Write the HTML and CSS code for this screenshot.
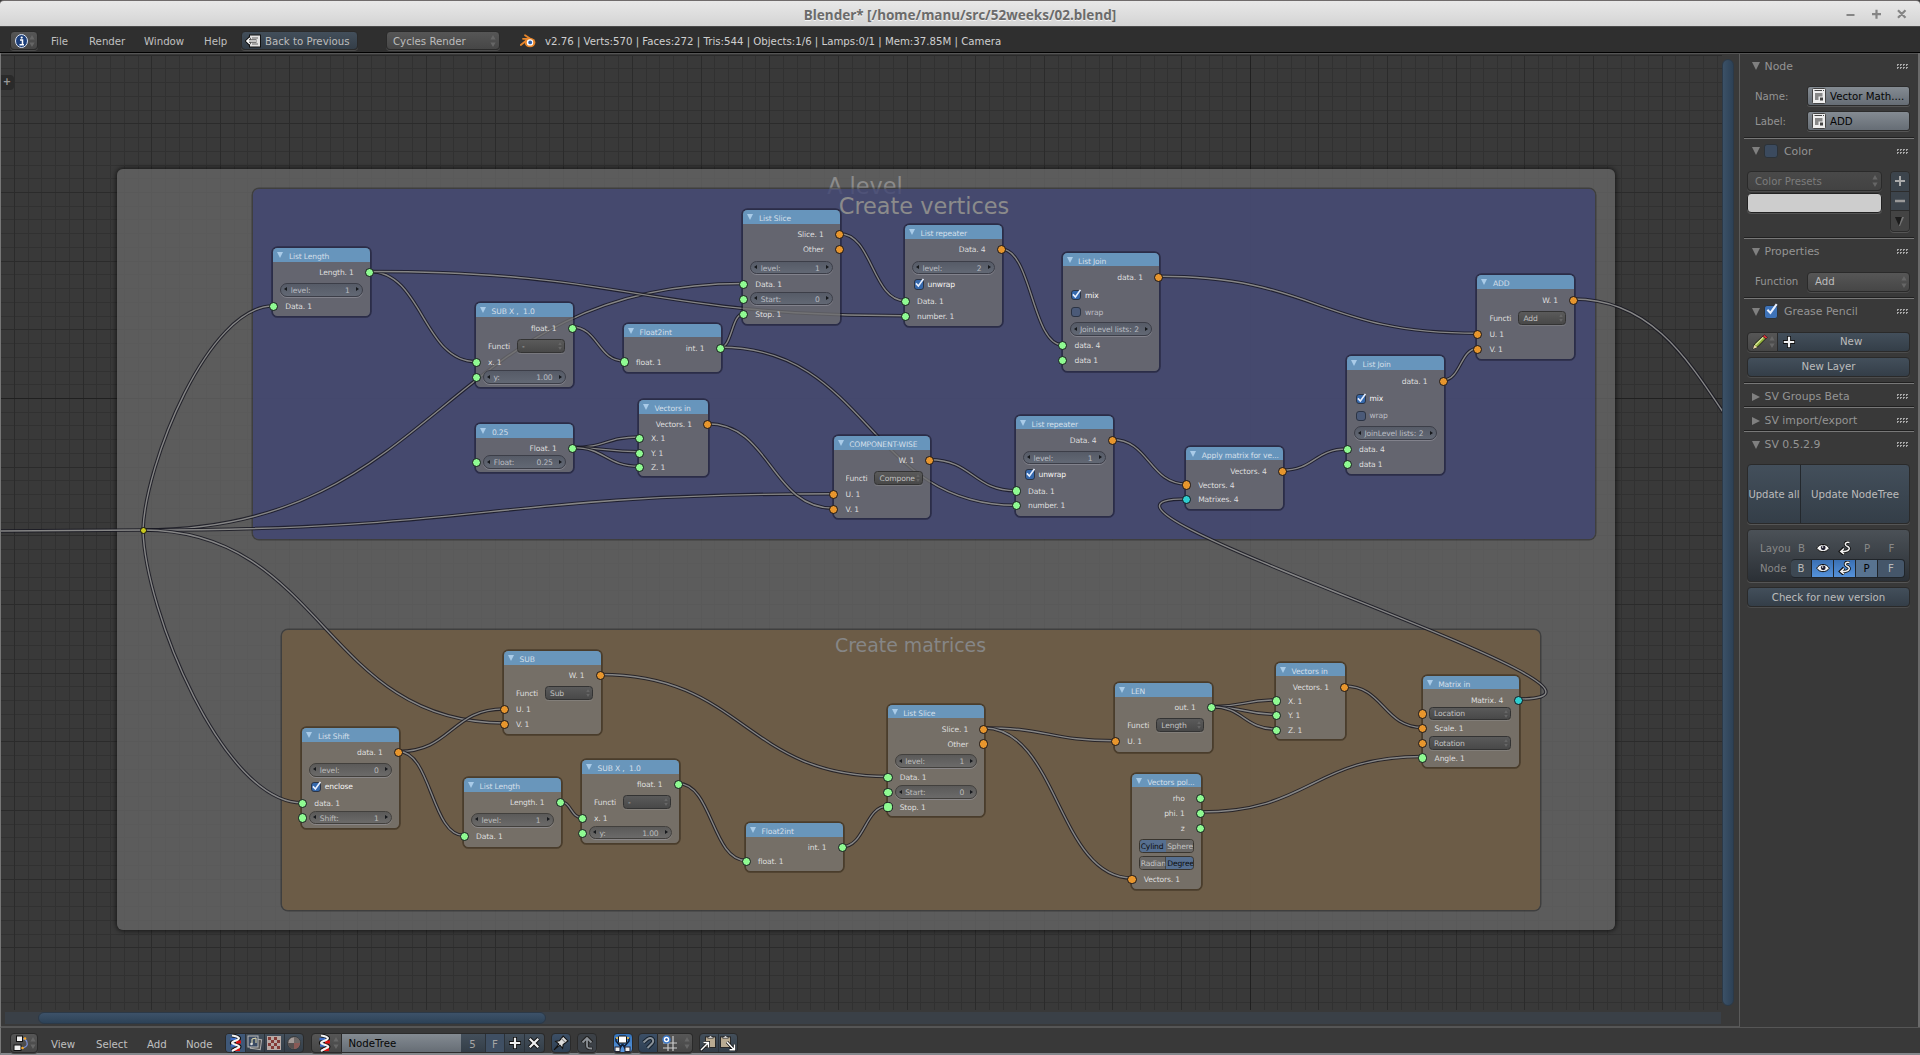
FILE: index.html
```html
<!DOCTYPE html>
<html lang="en">
<head>
<meta charset="utf-8">
<title>Blender* [/home/manu/src/52weeks/02.blend]</title>
<link rel="stylesheet" href="styles.css">
</head>
<body>
<svg class="defs" width="0" height="0">
  <symbol id="updown" viewBox="0 0 6 14"><path d="M3 1L5.6 5.6H.4zM3 13L.4 8.4h5.2z" fill="#666"/></symbol>
  <symbol id="plus" viewBox="0 0 12 12"><path d="M6 0v12M0 6h12" stroke="#111" stroke-width="4"/><path d="M6 .8v10.4M.8 6h10.4" stroke="#f0f0f0" stroke-width="2.2"/></symbol>
  <symbol id="check" viewBox="0 0 12 12"><path d="M2.2 6.2L5 9.2L10.8 1" stroke="#e8f0ff" stroke-width="1.9" fill="none"/></symbol>
  <symbol id="nodeicon" viewBox="0 0 14 16"><rect x=".5" y=".5" width="13" height="15" rx="1" fill="#eee" stroke="#444"/><path d="M2.5 2.500h7.500M11 2.500h1" stroke="#444" stroke-width="1"/><path d="M3 5h7.500v3.500H6.500V12H3z" fill="#888"/><rect x="8" y="9.500" width="3" height="3" fill="#444"/></symbol>
  <symbol id="helix" viewBox="0 0 14 18"><path d="M4 1.500C13 3 12 5 8 6.500S2 9 7 10.500S13 13 8.500 14.500L4 17" fill="none" stroke="#111" stroke-width="4.200"/><path d="M2.500 5h6M3 11.500h5" stroke="#3b6bc4" stroke-width="2.400"/><path d="M8 8h5M6 15.500h6" stroke="#d11" stroke-width="3"/><path d="M4 1.500C13 3 12 5 8 6.500S2 9 7 10.500S13 13 8.500 14.500L4 17" fill="none" stroke="#f2f2f2" stroke-width="2.100"/></symbol>
  <symbol id="eye" viewBox="0 0 14 10"><path d="M.7 5.200C3.500.2 10.500.2 13.300 5.200C10.500 9.800 3.500 9.800.7 5.200z" fill="#f4f4f4" stroke="#111"/><circle cx="7.200" cy="4.800" r="2.400" fill="#223"/><circle cx="6.600" cy="4" r=".8" fill="#fff"/></symbol>
  <symbol id="curve" viewBox="0 0 14 14"><path d="M11.500 1.500C7 .2 6 4 9.500 5.500S11.500 11 3 10.500M6 7L2.500 10.500L6 13.500" fill="none" stroke="#111" stroke-width="3.200"/><path d="M11.500 1.500C7 .2 6 4 9.500 5.500S11.500 11 3 10.500M6 7.500L2.800 10.500L6 13" fill="none" stroke="#f2f2f2" stroke-width="1.500"/></symbol>
  <symbol id="clip" viewBox="0 0 12 14"><rect x=".5" y="2" width="11" height="11.500" fill="#b9ab92" stroke="#222"/><path d="M3 3.500V2h1.500c0-1.800 3-1.800 3 0H9v1.500z" fill="#e5e5e5" stroke="#222" stroke-width=".7"/></symbol>
</svg>

<header class="titlebar">
  <h1>Blender* [/home/manu/src/52weeks/02.blend]</h1>
  <svg class="winbtns" width="66" height="14" viewBox="0 0 66 14"><path d="M5.500 8h8M31 7.200h9M35.500 2.700v9M57 3.200l7.500 7.500M64.500 3.200L57 10.700" stroke="#858585" stroke-width="2.200" fill="none"/></svg>
</header>

<nav class="menubar">
  <span class="btn grey editor"><svg width="13" height="14" viewBox="0 0 13 14"><ellipse cx="6.500" cy="7" rx="6" ry="6.500" fill="#1d3f7a" stroke="#dde6f5"/><path d="M5 6h2.500v4.500M4.500 10.800h4.500" stroke="#fff" stroke-width="1.500" fill="none"/><circle cx="6.700" cy="3.600" r="1.100" fill="#fff"/></svg><svg width="6" height="14"><use href="#updown"/></svg></span>
  <span class="m file">File</span><span class="m render">Render</span><span class="m window">Window</span><span class="m help">Help</span>
  <span class="btn blue back"><svg width="16" height="14" viewBox="0 0 16 14"><rect x="4.500" y="1" width="11" height="12" fill="#e2e2e2" stroke="#111"/><path d="M13 4H7M13 10H7" stroke="#666" stroke-width="1"/><path d="M11.500 7H1.500M5 3.500L1.500 7L5 10.500" fill="none" stroke="#111" stroke-width="3"/><path d="M11.500 7H2M5 4L1.800 7L5 10" fill="none" stroke="#fff" stroke-width="1.400"/></svg>Back to Previous</span>
  <span class="btn grey engine">Cycles Render<svg width="6" height="14"><use href="#updown"/></svg></span>
  <svg class="logo" width="16" height="14" viewBox="0 0 16 14"><path d="M5 1.200L13 6.500M.8 11L7 6M3 4.800h7" stroke="#e8862b" stroke-width="1.800" stroke-linecap="round"/><ellipse cx="10" cy="8.600" rx="5.400" ry="4.700" fill="#e8862b"/><circle cx="10" cy="8.400" r="3.200" fill="#fff"/><circle cx="10.200" cy="8.400" r="1.900" fill="#2d5ea8"/></svg>
  <span class="stats">v2.76 | Verts:570 | Faces:272 | Tris:544 | Objects:1/6 | Lamps:0/1 | Mem:37.85M | Camera</span>
</nav>

<main>
<section class="editor-area">
<div class="canvas">
  <svg class="grid" id="grid" width="1722" height="957" viewBox="0 53 1722 957"></svg>
  <span class="expander">+</span>
  <div class="layer">
    <div class="frame level"><h2>A level</h2></div>
    <div class="frame vertices"><h2>Create vertices</h2></div>
    <div class="frame matrices"><h2>Create matrices</h2></div>
  </div>
  <svg class="links" id="links" width="1722" height="957" viewBox="0 53 1722 957"></svg>
  <div class="layer">
    <i class="reroute"></i>

    <article class="node" id="length-a"><h3>List Length</h3>
      <p class="out g">Length. 1</p>
      <div class="controls"><div class="num"><span>level:</span><b>1</b></div></div>
      <p class="in g">Data. 1</p></article>

    <article class="node roomy" id="subx-a"><h3>SUB X ,&nbsp; 1.0</h3>
      <p class="out g">float. 1</p>
      <div class="controls"><div class="fn"><span>Functi</span><em>-<svg><use href="#updown"/></svg></em></div></div>
      <p class="in g">x. 1</p>
      <div class="in g"><div class="num"><span>y:</span><b>1.00</b></div></div></article>

    <article class="node tight" id="quarter"><h3>0.25</h3>
      <p class="out g">Float. 1</p>
      <div class="in g"><div class="num"><span>Float:</span><b>0.25</b></div></div></article>

    <article class="node tight" id="f2i-a"><h3>Float2int</h3>
      <p class="out g">int. 1</p>
      <p class="in g">float. 1</p></article>

    <article class="node tight" id="vin-a"><h3>Vectors in</h3>
      <p class="out o">Vectors. 1</p>
      <p class="in g">X. 1</p><p class="in g">Y. 1</p><p class="in g">Z. 1</p></article>

    <article class="node roomy" id="slice-a"><h3>List Slice</h3>
      <p class="out o">Slice. 1</p><p class="out o">Other</p>
      <div class="controls"><div class="num"><span>level:</span><b>1</b></div></div>
      <p class="in g">Data. 1</p>
      <div class="in g"><div class="num"><span>Start:</span><b>0</b></div></div>
      <p class="in g">Stop. 1</p></article>

    <article class="node roomy" id="rep-a"><h3>List repeater</h3>
      <p class="out o">Data. 4</p>
      <div class="controls"><div class="num"><span>level:</span><b>2</b></div><div class="tick on"><i><svg><use href="#check"/></svg></i>unwrap</div></div>
      <p class="in g">Data. 1</p><p class="in g">number. 1</p></article>

    <article class="node roomy" id="join-a"><h3>List Join</h3>
      <p class="out o">data. 1</p>
      <div class="controls"><div class="tick on"><i><svg><use href="#check"/></svg></i>mix</div><div class="tick"><i></i>wrap</div><div class="num"><span>JoinLevel lists:</span><b>2</b></div></div>
      <p class="in g">data. 4</p><p class="in g">data 1</p></article>

    <article class="node" id="component"><h3>COMPONENT-WISE</h3>
      <p class="out o">W. 1</p>
      <div class="controls"><div class="fn"><span>Functi</span><em>Compone<svg><use href="#updown"/></svg></em></div></div>
      <p class="in o">U. 1</p><p class="in o">V. 1</p></article>

    <article class="node" id="rep-b"><h3>List repeater</h3>
      <p class="out o">Data. 4</p>
      <div class="controls"><div class="num"><span>level:</span><b>1</b></div><div class="tick on"><i><svg><use href="#check"/></svg></i>unwrap</div></div>
      <p class="in g">Data. 1</p><p class="in g">number. 1</p></article>

    <article class="node tight" id="apply"><h3>Apply matrix for ve...</h3>
      <p class="out o">Vectors. 4</p>
      <p class="in o">Vectors. 4</p><p class="in c">Matrixes. 4</p></article>

    <article class="node roomy" id="join-b"><h3>List Join</h3>
      <p class="out o">data. 1</p>
      <div class="controls"><div class="tick on"><i><svg><use href="#check"/></svg></i>mix</div><div class="tick"><i></i>wrap</div><div class="num"><span>JoinLevel lists:</span><b>2</b></div></div>
      <p class="in g">data. 4</p><p class="in g">data 1</p></article>

    <article class="node roomy" id="add"><h3>ADD</h3>
      <p class="out o">W. 1</p>
      <div class="controls"><div class="fn"><span>Functi</span><em>Add<svg><use href="#updown"/></svg></em></div></div>
      <p class="in o">U. 1</p><p class="in o">V. 1</p></article>

    <article class="node warm" id="shift"><h3>List Shift</h3>
      <p class="out o">data. 1</p>
      <div class="controls"><div class="num"><span>level:</span><b>0</b></div><div class="tick on"><i><svg><use href="#check"/></svg></i>enclose</div></div>
      <p class="in g">data. 1</p>
      <div class="in g"><div class="num"><span>Shift:</span><b>1</b></div></div></article>

    <article class="node warm" id="length-b"><h3>List Length</h3>
      <p class="out g">Length. 1</p>
      <div class="controls"><div class="num"><span>level:</span><b>1</b></div></div>
      <p class="in g">Data. 1</p></article>

    <article class="node warm" id="sub"><h3>SUB</h3>
      <p class="out o">W. 1</p>
      <div class="controls"><div class="fn"><span>Functi</span><em>Sub<svg><use href="#updown"/></svg></em></div></div>
      <p class="in o">U. 1</p><p class="in o">V. 1</p></article>

    <article class="node warm" id="subx-b"><h3>SUB X ,&nbsp; 1.0</h3>
      <p class="out g">float. 1</p>
      <div class="controls"><div class="fn"><span>Functi</span><em>-<svg><use href="#updown"/></svg></em></div></div>
      <p class="in g">x. 1</p>
      <div class="in g"><div class="num"><span>y:</span><b>1.00</b></div></div></article>

    <article class="node warm tight" id="f2i-b"><h3>Float2int</h3>
      <p class="out g">int. 1</p>
      <p class="in g">float. 1</p></article>

    <article class="node warm" id="slice-b"><h3>List Slice</h3>
      <p class="out o">Slice. 1</p><p class="out o">Other</p>
      <div class="controls"><div class="num"><span>level:</span><b>1</b></div></div>
      <p class="in g">Data. 1</p>
      <div class="in g"><div class="num"><span>Start:</span><b>0</b></div></div>
      <p class="in g">Stop. 1</p></article>

    <article class="node warm" id="len"><h3>LEN</h3>
      <p class="out g">out. 1</p>
      <div class="controls"><div class="fn"><span>Functi</span><em>Length<svg><use href="#updown"/></svg></em></div></div>
      <p class="in o">U. 1</p></article>

    <article class="node warm roomy" id="polar"><h3>Vectors pol...</h3>
      <p class="out g">rho</p><p class="out g">phi. 1</p><p class="out g">z</p>
      <div class="controls"><div class="pair"><span class="sel">Cylind</span><span>Sphere</span></div><div class="pair"><span>Radian</span><span class="sel">Degree</span></div></div>
      <p class="in o">Vectors. 1</p></article>

    <article class="node warm tight" id="vin-b"><h3>Vectors in</h3>
      <p class="out o">Vectors. 1</p>
      <p class="in g">X. 1</p><p class="in g">Y. 1</p><p class="in g">Z. 1</p></article>

    <article class="node warm tight" id="matrix"><h3>Matrix in</h3>
      <p class="out c">Matrix. 4</p>
      <div class="in o"><em class="drop">Location<svg><use href="#updown"/></svg></em></div>
      <p class="in o">Scale. 1</p>
      <div class="in o"><em class="drop">Rotation<svg><use href="#updown"/></svg></em></div>
      <p class="in g">Angle. 1</p></article>
  </div>
</div>
<div class="vscroll"><i></i></div>
<div class="hscroll"><i></i></div>
</section>

<aside>
  <section class="s-node">
    <h4><i class="tri"></i>Node<i class="dots"></i></h4>
    <div class="prop"><label>Name:</label><span class="text"><svg width="14" height="16"><use href="#nodeicon"/></svg>Vector Math....</span></div>
    <div class="prop"><label>Label:</label><span class="text"><svg width="14" height="16"><use href="#nodeicon"/></svg>ADD</span></div>
  </section>
  <section class="s-color">
    <h4><i class="tri"></i><i class="box"></i>Color<i class="dots"></i></h4>
    <div class="presets">
      <div class="left"><span class="btn grey dim">Color Presets<svg width="6" height="14"><use href="#updown"/></svg></span><span class="swatch"></span></div>
      <div class="stack"><span><svg width="12" height="12" viewBox="0 0 12 12"><path d="M6 1v10M1 6h10" stroke="#aaa" stroke-width="2"/></svg></span><span><svg width="12" height="12" viewBox="0 0 12 12"><path d="M1 6h10" stroke="#999" stroke-width="2.500"/></svg></span><span class="last"><svg width="12" height="12" viewBox="0 0 12 12"><path d="M1 2h7L5 11z" fill="#1c1c1c"/><path d="M8 2h2L6 11H5z" fill="#777"/></svg></span></div>
    </div>
  </section>
  <section class="s-props">
    <h4><i class="tri"></i>Properties<i class="dots"></i></h4>
    <div class="prop"><label>Function</label><span class="btn grey fnsel">Add<svg width="6" height="14"><use href="#updown"/></svg></span></div>
  </section>
  <section class="s-grease">
    <h4><i class="tri"></i><i class="box on"><svg width="13" height="13"><use href="#check"/></svg></i>Grease Pencil<i class="dots"></i></h4>
    <div class="newrow"><span class="btn grey pencil"><svg width="16" height="16" viewBox="0 0 16 16"><path d="M1 15l1.500-5L11 2l3 2.500L5.500 13z" fill="#8fae3a" stroke="#1a1a1a"/><path d="M3.500 11L11.500 3" stroke="#d8e89a" stroke-width="1.200"/><path d="M10.500 2.300l2-1.500 3 2.500-1.500 1.700z" fill="#d8343a" stroke="#1a1a1a" stroke-width=".6"/><path d="M1 15l1.200-4 3 2.200z" fill="#e8d7a8"/></svg><svg width="6" height="14"><use href="#updown"/></svg></span><span class="btn blue new"><svg width="12" height="12"><use href="#plus"/></svg><b>New</b></span></div>
    <span class="btn blue wide">New Layer</span>
  </section>
  <section class="s-fold"><h4><i class="tri closed"></i>SV Groups Beta<i class="dots"></i></h4></section>
  <section class="s-fold"><h4><i class="tri closed"></i>SV import/export<i class="dots"></i></h4></section>
  <section class="s-sv">
    <h4><i class="tri"></i>SV 0.5.2.9<i class="dots"></i></h4>
    <div class="update"><span>Update all</span><span>Update NodeTree</span></div>
    <div class="togbox">
      <div class="trow"><span class="tl">Layou</span><span>B</span><span><svg width="14" height="10"><use href="#eye"/></svg></span><span><svg width="14" height="14"><use href="#curve"/></svg></span><span>P</span><span>F</span></div>
      <div class="trow live"><span class="tl">Node</span><span>B</span><span class="hot"><svg width="14" height="10"><use href="#eye"/></svg></span><span class="hot"><svg width="14" height="14"><use href="#curve"/></svg></span><span class="mid">P</span><span class="end">F</span></div>
    </div>
    <span class="btn blue wide">Check for new version</span>
  </section>
</aside>
</main>

<footer>
  <span class="btn grey f-ed"><svg width="17" height="17" viewBox="0 0 17 17"><path d="M6 4h6M12 4c3 3 4 8-3 9" stroke="#7a90d8" fill="none" stroke-width="1.300"/><rect x="3.500" y="1" width="6" height="5.500" fill="#eee" stroke="#111"/><rect x="1" y="10" width="7" height="5.500" fill="#eee" stroke="#111"/><circle cx="12" cy="3.500" r="1.300" fill="#f5a623"/><circle cx="9.500" cy="13" r="1.300" fill="#f5a623"/></svg><svg width="6" height="14"><use href="#updown"/></svg></span>
  <span class="m view">View</span><span class="m select">Select</span><span class="m addm">Add</span><span class="m nodem">Node</span>
  <span class="group types">
    <span class="on"><svg width="14" height="18"><use href="#helix"/></svg></span>
    <span><svg width="16" height="16" viewBox="0 0 16 16"><rect x="4" y="4" width="10" height="10" transform="rotate(8 9 9)" fill="#555" stroke="#aaa"/><rect x="1" y="1" width="10" height="11" fill="#3a4a63" stroke="#bbb"/><path d="M5 9V4l4-1v5" stroke="#e8e0b0" fill="none"/><circle cx="4.500" cy="9" r="1.300" fill="#ddd"/></svg></span>
    <span><svg width="14" height="14" viewBox="0 0 14 14"><rect width="14" height="14" fill="#b8aaa5"/><path d="M1 1h3v3H1zM7 1h3v3H7zM4 4h3v3H4zM10 4h3v3h-3zM1 7h3v3H1zM7 7h3v3H7zM4 10h3v3H4zM10 10h3v3h-3z" fill="#843c38"/></svg></span>
    <span><svg width="14" height="14" viewBox="0 0 14 14"><circle cx="7" cy="7" r="6.300" fill="#a39a97" stroke="#333"/><path d="M7 1A6 6 0 0 1 13 7H7z" fill="#6e6866"/><path d="M7 7v6A6 6 0 0 0 13 7z" fill="#8a5a56"/><path d="M1 7A6 6 0 0 0 7 13V7z" fill="#56504f"/></svg></span>
  </span>
  <span class="btn grey tree"><svg width="14" height="18"><use href="#helix"/></svg><svg width="6" height="14"><use href="#updown"/></svg></span>
  <span class="name">NodeTree</span>
  <span class="group acts"><span class="five">5</span><span class="f">F</span><span><svg width="12" height="12"><use href="#plus"/></svg></span><span><svg width="12" height="12" viewBox="0 0 12 12"><path d="M1.500 1.500l9 9M10.500 1.500l-9 9" stroke="#111" stroke-width="4"/><path d="M1.700 1.700l8.600 8.600M10.300 1.700l-8.600 8.600" stroke="#f0f0f0" stroke-width="2.100"/></svg></span></span>
  <span class="btn navy pin"><svg width="16" height="16" viewBox="0 0 15 15"><path d="M1 14l4.500-5.500L2.500 6l3.500-.5L9.500 1 14 5.500 9.500 9 9 12.500 6.500 9.500z" fill="#ddd" stroke="#111"/><path d="M8 3.500l3.500 3.500" stroke="#888"/></svg></span>
  <span class="btn blue faded up"><svg width="14" height="15" viewBox="0 0 14 15"><path d="M7 2v8c0 2 1 2.500 5.500 2.500M2 6.500L7 1.500l5 5" fill="none" stroke="#222" stroke-width="3.500"/><path d="M7 2v8c0 2 1 2.500 5 2.500M2.500 6.500L7 2l4.500 4.500" fill="none" stroke="#8d9298" stroke-width="1.800"/></svg></span>
  <span class="btn bright"><svg width="17" height="17" viewBox="0 0 17 17"><path d="M2 3v3l5 6M15 3v3l-5 6M8.500 9l-3 5M8.500 9l3 5" stroke="#10203a" fill="none" stroke-width="1.500"/><rect x="4.500" y="1" width="8" height="7" rx="1" fill="#fff" stroke="#111"/><rect x="1" y="12" width="5" height="4.500" fill="#eee" stroke="#223"/><rect x="11" y="12" width="5" height="4.500" fill="#eee" stroke="#223"/><circle cx="3" cy="3" r="1.100" fill="#f5c04a"/><circle cx="14" cy="3" r="1.100" fill="#f5c04a"/></svg></span>
  <span class="btn navy magnet"><svg width="14" height="14" viewBox="0 0 14 14"><path d="M2.500 6.500L6.500 3c5-3 7 2 4.500 4.500L6.500 12" fill="none" stroke="#15202c" stroke-width="4"/><path d="M2.500 6.500L6.500 3c5-3 7 2 4.500 4.500L6.500 12" fill="none" stroke="#8a929a" stroke-width="2"/></svg></span>
  <span class="btn grey snap"><svg width="15" height="16" viewBox="0 0 15 16"><path d="M6 4v12M11 1v15M1 8h14M1 13h14" stroke="#ccc" stroke-width="1.200"/><circle cx="4.500" cy="4.500" r="3.500" fill="#fff" stroke="#3b78c8" stroke-width="1.500"/><circle cx="4.500" cy="4.500" r="1.200" fill="#2255a5"/></svg><svg width="6" height="14"><use href="#updown"/></svg></span>
  <span class="group clips"><span><svg width="17" height="16" viewBox="0 0 17 16"><svg x="5" y="0" width="11" height="13"><use href="#clip"/></svg><path d="M1 15L8 8M3.500 7.500H8.500V12.500" fill="none" stroke="#111" stroke-width="3"/><path d="M1 15L8 8M3.500 7.500H8.500V12.500" fill="none" stroke="#fff" stroke-width="1.500"/></svg></span><span><svg width="17" height="16" viewBox="0 0 17 16"><svg x="1" y="0" width="11" height="13"><use href="#clip"/></svg><path d="M8 7l7 7.500M10.500 14.800H15.500V9.500" fill="none" stroke="#111" stroke-width="3"/><path d="M8 7l7 7.500M10.500 14.800H15.500V9.500" fill="none" stroke="#fff" stroke-width="1.500"/></svg></span></span>
</footer>
<script src="script.js"></script>
</body>
</html>
```
FILE: script.js
```js
// Background grid: thin lines every 13.73px, stronger every fifth, axes darkest.
const STEP = 13.732, OX = 1250.3, OY = 398.5;
const tiers = { minor: '', major: '', axis: '' };
const tier = k => (k === 0 ? 'axis' : k % 5 === 0 ? 'major' : 'minor');
for (let k = -92; k <= 34; k++) tiers[tier(k)] += `M${Math.floor(OX + k * STEP) + 0.5} 55V1010`;
for (let k = -25; k <= 44; k++) tiers[tier(k)] += `M0 ${Math.floor(OY + k * STEP) + 0.5}H1722`;
document.getElementById('grid').innerHTML =
  Object.entries(tiers).map(([name, d]) => `<path class="${name}" d="${d}"/>`).join('');

// Links: output socket x, y -> input socket x, y.
const links = [
  [143, 530, 743, 283.5], [143, 530, 834, 493.8],
  [143, 530, 504, 723],
  [369.5, 271.5, 476, 361.7], [369.5, 271.5, 905, 315.7],
  [572, 327, 624, 361], [572.5, 447.6, 639, 437], [572.5, 447.6, 639, 451.7], [572.5, 447.6, 639, 466.3],
  [720.5, 347.3, 743.3, 313.7], [720.5, 347.3, 1016, 505.3],
  [707.5, 423.7, 834, 508.3], [839.7, 233.7, 905, 300.7],
  [1001, 249, 1062.7, 345], [1158.5, 276.3, 1477.5, 333.3],
  [929.7, 459.7, 1016, 490.7], [1112, 439.5, 1186.4, 484],
  [1282, 470.3, 1347, 449], [1443.5, 380, 1477.5, 348.5],
  [1573.5, 299, 1870.5, 522], [1519, 699, 1186.4, 498.9],
  [398.7, 751.5, 504, 708.9], [398.7, 751.5, 464, 835.5],
  [560, 801.5, 582, 817.8], [678.3, 783.6, 746, 860.5],
  [842.3, 846.7, 887.7, 806], [600.5, 674.5, 887.7, 776.5],
  [984, 728, 1115.3, 740.7], [984, 728, 1131.7, 878],
  [1211.5, 706.7, 1276, 700], [1211.5, 706.7, 1276, 714.3], [1211.5, 706.7, 1276, 729],
  [1344.5, 686, 1422.7, 727.5], [1200.3, 812, 1422.7, 756.5],
];
const curves = links.map(([x1, y1, x2, y2]) => {
  const h = Math.abs(x2 - x1) / 2;
  return `M${x1} ${y1}C${x1 + h} ${y1} ${x2 - h} ${y2} ${x2} ${y2}`;
});
// Steep links leave the reroute point vertically.
curves.push('M0 531L143 530', 'M143 530C145 465 208 306 273 306', 'M143 530C145 610 223 802.8 302 802.8');
document.getElementById('links').innerHTML =
  curves.map(d => `<path class="edge" d="${d}"/><path class="core" d="${d}"/>`).join('');
```
FILE: styles.css
```css
* { box-sizing: border-box; margin: 0; }
body { width: 1920px; height: 1055px; overflow: hidden; display: flex; flex-direction: column; background: #393939; color: #b4b4b4; font: 10.2px "DejaVu Sans", sans-serif; }
i, em { font-style: normal; }
.defs { position: absolute; }
svg { flex: none; display: block; }

.titlebar { height: 27px; flex: none; background: linear-gradient(#e8e8e8, #d4d4d4); border-top: 1px solid #6f6b6b; border-bottom: 1px solid #4a4a4a; border-radius: 4px 4px 0 0; display: grid; grid-template-columns: 1fr auto 1fr; align-items: center; }
.titlebar h1 { grid-column: 2; font: bold 13.5px "Noto Sans", sans-serif; color: #6b6b6b; text-shadow: 0 1px #f6f6f6; padding-top: 2px; white-space: nowrap; }
.winbtns { justify-self: end; margin: 1px 13px 0 0; }

.menubar { height: 26px; flex: none; background: #2f2f2f; border-bottom: 1px solid #000; display: flex; align-items: center; padding: 2px 0 0 10px; }
.m { color: #c0c0c0; padding-top: 2px; }
.file { width: 38px; margin-left: 13px; } .render { width: 55px; } .window { width: 60px; } .help { width: 37px; }
.btn { display: flex; align-items: center; height: 19px; border-radius: 4px; border: 1px solid #2a2a2a; box-shadow: 0 1px #4c4c4c; white-space: nowrap; color: #bcbcbc; }
.grey { background: linear-gradient(#565656, #464646); }
.blue { background: linear-gradient(#434f5b, #343e48); }
.navy { background: linear-gradient(#3c4f66, #2f4054); }
.bright { background: linear-gradient(#3572b8, #5696df); }
.editor { width: 28px; justify-content: space-between; padding: 0 2px 0 4px; }
.back { width: 117px; gap: 4px; padding-left: 3px; padding-top: 1px; }
.engine { width: 114px; margin-left: 28px; padding: 1px 3px 0 6px; justify-content: space-between; }
.logo { margin: 0 9px 0 20px; }
.stats { color: #cfcfcf; white-space: nowrap; font-size: 10.2px; padding-top: 2px; }

main { display: flex; height: 974px; flex: none; border-left: 1px solid #777; border-right: 2px solid #6a6a6a; }
.editor-area { width: 1739px; flex: none; display: grid; grid-template: 957px 17px / 1721px 17px; border-right: 1px solid #5a5a5a; background: #393939; border-top: 1px solid #555; }
.canvas { position: relative; overflow: hidden; }
.grid, .links { position: absolute; left: -1px; top: -1px; fill: none; }
.minor { stroke: #313131; } .major { stroke: #2b2b2b; } .axis { stroke: #202020; }
.expander { position: absolute; left: -1px; top: 21px; width: 14px; height: 15px; border-radius: 0 4px 4px 0; background: #2a2a2a; color: #999; font-weight: bold; font-size: 10px; line-height: 14px; text-align: center; }
.layer { position: absolute; left: -1px; top: -54px; }
.edge { stroke: #161620; stroke-opacity: .8; stroke-width: 3.5; }
.core { stroke: #868686; stroke-width: 1.4; }
.vscroll { padding: 5px 0 0 0; }
.vscroll i { display: block; width: 12px; height: 947px; border-radius: 6px; background: linear-gradient(90deg, #3b5167, #2d4156); border: 1px solid #2c3947; }
.hscroll { grid-column: 1 / 3; height: 16px; padding: 1px 15px 0 4px; border-bottom: 1px solid #555; background: linear-gradient(#3a4047, #3a4047) 4px 1px / 1716px 12px no-repeat; }
.hscroll i { display: block; margin-left: 33px; width: 508px; height: 12px; border-radius: 6px; background: linear-gradient(#3d5269, #2d4257); border: 1px solid #2c3947; }

.frame { position: absolute; border-radius: 6px; text-align: center; box-shadow: 0 0 0 1.500px rgba(20,20,20,.4); }
.frame h2 { font-weight: normal; color: #8b8b8b; line-height: 1; white-space: nowrap; margin-left: -2px; }
.level { left: 117px; top: 169px; width: 1498px; height: 761px; background: rgba(101,101,101,.8); box-shadow: 0 0 4px 1px rgba(10,10,10,.7); }
.level h2 { font-size: 22.400px; padding-top: 6px; }
.vertices { left: 253px; top: 189px; width: 1342px; height: 350px; background: rgba(64,69,115,.8); }
.vertices h2 { font-size: 22.400px; padding-top: 6px; margin-left: 0; }
.matrices { left: 282px; top: 629.500px; width: 1258px; height: 280px; background: rgba(112,93,66,.8); }
.matrices h2 { font-size: 18.900px; padding-top: 6px; color: #868686; margin-left: -1px; }

.reroute { position: absolute; left: 139.500px; top: 526.500px; width: 7px; height: 7px; border-radius: 50%; background: #c8c81e; border: 1px solid #111; }

.node { --row: 14.700px; --btn: 17px; --gap: 2px; position: absolute; width: 96.500px; border-radius: 4.500px; background: rgba(109,109,112,.78); box-shadow: 0 0 0 1.800px rgba(18,18,34,.5); font-size: 7.600px; letter-spacing: -.15px; color: #dedede; white-space: nowrap; }
.node.warm { background: rgba(119,114,109,.85); box-shadow: 0 0 0 1.800px rgba(40,30,18,.5); }
.node.roomy { --row: 15px; --gap: 2.500px; }
.node h3 { height: 13.500px; margin-bottom: 2.900px; padding: 1px 0 0 15.600px; background: rgba(103,158,202,.85); border-radius: 4.500px 4.500px 0 0; font-size: 7.600px; font-weight: normal; line-height: 15.500px; letter-spacing: -.15px; position: relative; color: #d3dfe9; }
.node h3::before { content: ""; position: absolute; left: 4px; top: 4px; border: 3.500px solid transparent; border-top: 6.500px solid #a9cbe8; border-bottom: 0; }
.out, .in { position: relative; height: var(--row); line-height: calc(var(--row) + 3.600px); }
.out { text-align: right; padding-right: 16px; }
.in { padding-left: 12px; }
.out::after, .in::before { content: ""; position: absolute; top: calc(var(--row) / 2 - 3.600px); width: 7.200px; height: 7.200px; border-radius: 50%; border: 1px solid #15151c; background: #8ffb92; }
.in::before { left: -4.300px; } .out::after { right: -4.300px; }
.o::after, .o::before { background: #e8962d; }
.c::after, .c::before { background: #2fcfd0; }
.tight .out { margin-bottom: -1px; }
.controls { padding-top: var(--gap); }
.controls > div { height: 13.600px; margin: 0 7px calc(var(--btn) - 13.600px); position: relative; top: 1.900px; }
.num { display: flex; justify-content: space-between; align-items: center; height: 13.600px; border-radius: 7px; border: 1px solid #3c3e48; background: linear-gradient(#565b67, #626874); box-shadow: 0 1px rgba(160,160,170,.5); padding: 1.500px 12px 0 9.500px; color: #b9bcc2; line-height: 11px; position: relative; }
.warm .num { background: linear-gradient(#5b5a59, #6b6a69); border-color: #42403d; color: #bbb; }
.num b { font-weight: normal; }
.num::before, .num::after { content: ""; position: absolute; top: 3.500px; border: 2.400px solid transparent; }
.num::before { left: 3px; border-right: 3px solid #16181c; border-left: 0; }
.num::after { right: 3px; border-left: 3px solid #16181c; border-right: 0; }
.in .num { position: absolute; left: 7px; right: 7px; top: 1px; }
.fn { display: flex; align-items: center; }
.fn span { width: 28.500px; margin-left: 5px; padding-top: 1.500px; overflow: hidden; flex: none; }
.fn em, .drop { display: flex; align-items: center; justify-content: space-between; height: 13.600px; width: 48.500px; border-radius: 3.500px; border: 1px solid #333; background: linear-gradient(#5a5a5a, #484848); box-shadow: 0 1px rgba(150,150,150,.4); padding: 1px 2px 0 4.500px; color: #c0c0c0; line-height: 11px; }
.fn svg, .drop svg { width: 4px; height: 10px; }
.drop { position: absolute; left: 6px; right: 8px; top: 1px; width: auto; }
.tick { display: flex; align-items: center; gap: 4px; color: #bcbdc4; }
.tick i { width: 10px; height: 10.500px; margin-left: 1.500px; border-radius: 3px; border: 1px solid #2c3444; background: #4b5a78; }
.tick.on { color: #f4f4f4; }
.tick.on i { background: #3568ac; }
.tick svg { width: 10.500px; height: 10.500px; margin: -2px 0 0 -1px; }
.pair { display: flex; border: 1px solid #39352f; border-radius: 3.500px; overflow: hidden; }
.pair span { flex: 1; width: 0; overflow: hidden; line-height: 13.500px; padding-left: 1px; color: #c2c2c2; background: #6a6866; }
.pair .sel { background: #566f90; color: #0c0c0c; box-shadow: 0 0 0 .5px #222; }

#length-a { left: 273.300px; top: 248px; height: 68px; }
#subx-a { left: 476px; top: 303.300px; height: 84px; }
#quarter { left: 476.300px; top: 424px; height: 48px; }
#f2i-a { left: 624px; top: 323.600px; height: 48px; }
#vin-a { left: 639px; top: 400px; height: 76px; width: 69px; }
#slice-a { left: 743.300px; top: 210px; height: 114px; }
#rep-a { left: 905px; top: 225px; height: 101px; }
#join-a { left: 1062.500px; top: 252.500px; height: 118.500px; }
#component { left: 833.600px; top: 436px; height: 82.300px; }
#rep-b { left: 1016px; top: 415.700px; height: 100px; }
#apply { left: 1186.200px; top: 446.500px; height: 62.300px; }
#join-b { left: 1347px; top: 356.400px; height: 118px; }
#add { left: 1477.400px; top: 275.400px; height: 83.600px; }
#shift { left: 302.300px; top: 728px; height: 100px; }
#length-b { left: 464px; top: 778px; height: 68.500px; }
#sub { left: 504px; top: 651px; height: 83px; }
#subx-b { left: 582px; top: 760px; height: 83px; }
#f2i-b { left: 746px; top: 823px; height: 48px; }
#slice-b { left: 887.700px; top: 704.600px; height: 111.700px; }
#len { left: 1115.300px; top: 683px; height: 68.500px; }
#polar { left: 1131.700px; top: 773.500px; height: 115.400px; width: 69px; }
#vin-b { left: 1276px; top: 662.600px; height: 76.300px; width: 69px; }
#matrix { left: 1422.600px; top: 675.600px; height: 91px; }

aside { flex: 1; padding: 1px 4px 0 4px; background: #393939; border-top: 1px solid #555; }
aside section { border-bottom: 1px solid #787878; box-shadow: inset 0 -1px #202020; }
aside h4 { font-weight: normal; font-size: 10.900px; color: #949494; display: flex; align-items: center; height: 24px; padding: 0 6px 0 8px; }
.tri { border: 4px solid transparent; border-top: 8px solid #808080; border-bottom: 0; margin-right: 4.500px; }
.closed { border: 4.500px solid transparent; border-left: 8px solid #808080; border-right: 0; }
.dots { margin-left: auto; width: 11px; height: 5px; background: radial-gradient(circle at .8px .8px, #a8a8a8 .8px, transparent 1px) 0 0 / 3px 3px; }
.prop { display: flex; justify-content: space-between; align-items: center; height: 19px; padding: 0 4px 0 11px; margin-bottom: 6px; color: #949494; }
.text, .fnsel { width: 103px; }
.text { height: 20px; display: flex; align-items: center; gap: 4px; border-radius: 3px; border: 1px solid #2c2c2c; background: linear-gradient(#848b92, #666d75); box-shadow: 0 1px #555; color: #050505; padding-left: 4px; white-space: nowrap; }
.fnsel { padding: 0 2px 0 7px; justify-content: space-between; height: 20px; }
.s-node { height: 84px; } .s-node h4 { height: 22px; margin-bottom: 9.500px; }
.s-color { height: 100px; } .s-color h4 { height: 24px; margin-bottom: 8px; }
.s-props { height: 60px; } .s-props h4 { height: 25px; margin-bottom: 8px; }
.s-grease { height: 84.500px; } .s-grease h4 { height: 25px; margin-bottom: 7.500px; }
.s-fold { height: 24px; } .s-fold h4 { height: 26px; }
.box { width: 14px; height: 14px; border-radius: 3px; border: 1px solid #2c3238; background: #3b4a5e; margin: 0 6px 0 -.5px; }
.box.on { background: #3d72b8; } .box svg { margin: -3px 0 0 0; }
.presets { display: flex; justify-content: space-between; padding: 0 4px 0 3px; }
.left { width: 135px; display: flex; flex-direction: column; gap: 2px; }
.dim { color: #7c7c7c; background: linear-gradient(#494949, #424242); padding: 0 3px 0 7px; justify-content: space-between; height: 20px; }
.swatch { height: 20px; border-radius: 4px; background: #cdcdcd; border: 1px solid #222; box-shadow: 0 1px #555; }
.stack { width: 20px; border-radius: 4px; border: 1px solid #2c2c2c; overflow: hidden; box-shadow: 0 1px #555; }
.stack span { height: 19.500px; display: grid; place-items: center; background: #3c444c; border-bottom: 1px solid #2c2c2c; }
.stack .last { background: #444; border: 0; }
.newrow { display: flex; margin: 0 4px 5px 3px; }
.pencil { width: 31px; padding: 0 2px 0 4px; justify-content: space-between; border-radius: 4px 0 0 4px; height: 20px; }
.new { flex: 1; border-left: 0; border-radius: 0 4px 4px 0; padding-left: 5px; height: 20px; }
.new b { font-weight: normal; padding-left: 45px; }
.wide { margin: 0 4px 0 3px; justify-content: center; height: 20px; }
aside .s-sv { border: 0; box-shadow: none; } .s-sv h4 { height: 26px; margin-bottom: 6.500px; }
.update { display: flex; margin: 0 4px 5px 3px; height: 60px; border-radius: 4px; border: 1px solid #2a2a2a; box-shadow: 0 1px #555; background: linear-gradient(#434f5b, #343e48); color: #bcbcbc; }
.update span { display: grid; place-items: center; white-space: nowrap; flex: 1; }
.update span:first-child { flex: none; width: 53px; font-size: 10px; border-right: 1px solid #23282d; }
.togbox { margin: 0 4px 5px 3px; height: 53px; border-radius: 4px; border: 1px solid #2c2c2c; box-shadow: 0 1px #555; background: linear-gradient(#4b5157, #2b3036); padding: 8px 4px 0 12px; color: #878787; }
.trow { display: grid; grid-template-columns: 31px 21px 22px 22px 22px 27px; height: 20px; align-items: center; text-align: center; }
.trow > span { display: grid; place-items: center; height: 19px; }
.trow .tl { place-items: center start; }
.live > span:not(.tl) { background: #3d4853; border-right: 1px solid #20252a; border-top: 1px solid #20252a; border-bottom: 1px solid #20252a; color: #b8b8b8; }
.live > span:nth-child(2) { border-radius: 4px 0 0 4px; }
.live > .hot.hot { background: linear-gradient(#3a70b4, #5592da); }
.live > .mid.mid { background: #587390; color: #050505; }
.live > .end.end { border-radius: 0 4px 4px 0; background: #45566a; }

footer { height: 28px; flex: none; background: #393939; border-top: 1px solid #565656; border-left: 1px solid #777; border-bottom: 2px solid #85888c; display: flex; align-items: center; padding: 5px 0 0 9px; }
footer .m { padding-top: 3px; } footer .btn, .group { height: 20px; }
.f-ed { width: 28px; padding: 0 1px 0 2px; justify-content: space-between; }
.view { width: 45px; margin-left: 13px; } .select { width: 51px; } .addm { width: 39px; } .nodem { width: 39px; }
.group { display: flex; border: 1px solid #2a2a2a; border-radius: 4px; overflow: hidden; background: linear-gradient(#434f5b, #343e48); flex: none; }
.group > span { display: grid; place-items: center; flex: 1; border-right: 1px solid #2b3239; }
.group > span:last-child { border: 0; }
.types { width: 79px; } .types .on { background: #3f5878; }
.tree { width: 31px; margin-left: 6.500px; padding: 0 2px 0 5px; justify-content: space-between; border-radius: 4px 0 0 4px; }
.name { width: 119px; height: 20px; background: linear-gradient(#848b92, #666d75); border: 1px solid #2c2c2c; border-width: 1px 0; color: #050505; line-height: 20px; padding-left: 7px; }
.acts { width: 84px; border-radius: 0 4px 4px 0; border-left: 0; color: #a5a5a5; }
.acts .five { flex: 0 0 25px; } .acts .f { background: #3f4f63; }
.acts .five, .acts .f { padding-top: 2px; }
.pin { width: 20px; margin-left: 6px; justify-content: center; }
.up { width: 20px; margin: 0 16px 0 6px; justify-content: center; }
.faded { background: #3c4147; }
.bright, .magnet { width: 20px; justify-content: center; }
.magnet { margin-left: 5px; border-radius: 4px 0 0 4px; }
.snap { width: 35px; padding: 0 2px 0 4px; justify-content: space-between; border-radius: 0 4px 4px 0; border-left: 0; }
.clips { width: 39px; margin-left: 6px; }
```
